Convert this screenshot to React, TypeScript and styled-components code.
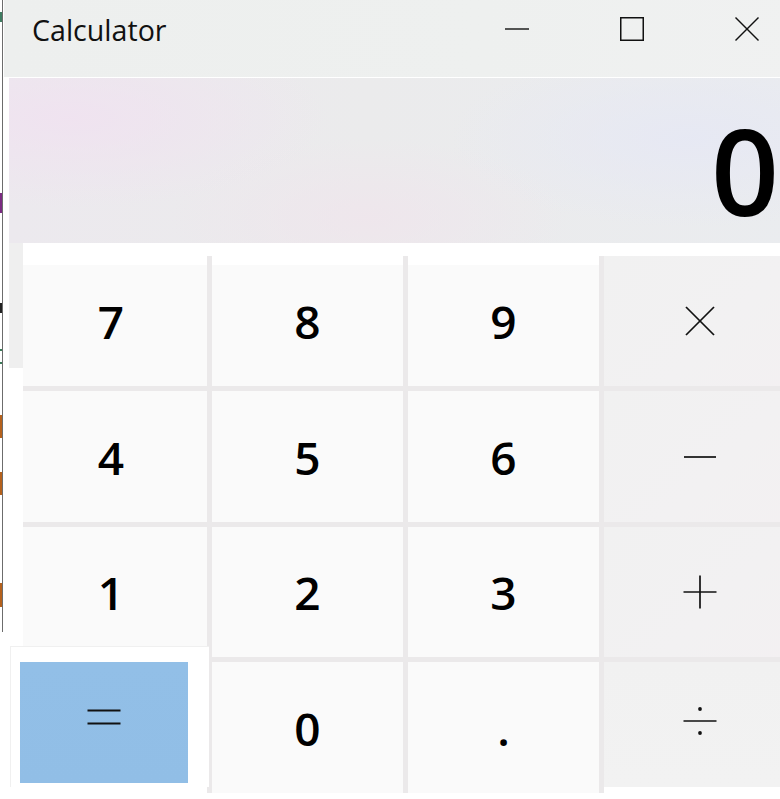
import React from "react";
import styled, { createGlobalStyle, css } from "styled-components";

const Global = createGlobalStyle`
  html, body { margin: 0; padding: 0; background: #ffffff; }
  body { width: 780px; height: 799px; overflow: hidden; font-family: "Open Sans", "Noto Sans", sans-serif; }
  #root { width: 780px; height: 799px; overflow: hidden; }
`;

const Screen = styled.div`
  display: flex;
  align-items: flex-start;
  width: 780px;
  height: 799px;
  overflow: hidden;
  background: #ffffff;
`;

const Edge = styled.div`
  flex: 0 0 4px;
  height: 632px;
  background:
    linear-gradient(to right, transparent 2px, #6c6c6c 2px, #6c6c6c 3px, transparent 3px),
    linear-gradient(
        to bottom,
        transparent 12px, #3f7d62 12px, #3f7d62 22px, transparent 22px,
        transparent 193px, #7b2b82 193px, #7b2b82 213px, transparent 213px,
        transparent 303px, #222 303px, #222 313px, transparent 313px,
        transparent 349px, #3a7a58 349px, #3a7a58 351px, transparent 351px,
        transparent 362px, #3a7a58 362px, #3a7a58 364px, transparent 364px,
        transparent 415px, #b5611c 415px, #b5611c 438px, transparent 438px,
        transparent 472px, #b5611c 472px, #b5611c 495px, transparent 495px,
        transparent 583px, #b5611c 583px, #b5611c 607px, transparent 607px
      )
      left top / 2px 100% no-repeat;
`;

const Window = styled.div`
  flex: 0 0 800px;
  display: flex;
  flex-direction: column;
`;

const TitleBar = styled.div`
  height: 78px;
  box-sizing: border-box;
  border-bottom: 1px solid #ffffff;
  background: linear-gradient(to right, #edefee 0%, #eef0ef 60%, #f0f1f1 100%);
  display: flex;
  align-items: flex-start;
  padding: 17px 0 0 28px;
`;

const Title = styled.span`
  font-family: "Open Sans", "Noto Sans", sans-serif;
  font-size: 28.6px;
  line-height: 1;
  font-weight: 400;
  color: #111111;
  margin-top: -1px;
`;

const Controls = styled.div`
  margin-left: auto;
  display: flex;
`;

const ControlButton = styled.div`
  width: 115px;
  height: 24px;
  display: flex;
  justify-content: center;
  align-items: center;
`;

const Display = styled.div`
  margin-left: 5px;
  height: 165px;
  box-sizing: border-box;
  display: flex;
  justify-content: flex-end;
  align-items: flex-start;
  padding: 33px 25px 0 0;
  background:
    radial-gradient(ellipse 260px 90px at 60px 40px, rgba(240, 226, 240, 0.9), transparent),
    radial-gradient(ellipse 200px 80px at 360px 140px, rgba(240, 228, 236, 0.7), transparent),
    radial-gradient(ellipse 240px 90px at 680px 60px, rgba(230, 232, 244, 0.9), transparent),
    linear-gradient(to right, #ece9ee 0%, #ebebec 45%, #eaecef 100%);
`;

const Value = styled.span`
  font-family: "Open Sans", "Noto Sans", sans-serif;
  font-size: 119px;
  font-weight: 600;
  line-height: 1;
  color: #000000;
`;

const Keypad = styled.div`
  display: flex;
  align-items: flex-start;
`;

const Gutter = styled.div`
  flex: 0 0 19px;
  display: flex;
  flex-direction: column;
`;

const GrayBlock = styled.div`
  margin-left: 5px;
  width: 14px;
  height: 125px;
  background: #efefef;
`;

const Grid = styled.div`
  margin-top: 13px;
  display: grid;
  grid-template-columns: 184px repeat(3, 191px);
  grid-template-rows: 130px 131px 130px 131px;
  gap: 5px;
  background: #ebe9ea;
`;

type KeyProps = {
  $kind: "digit" | "op" | "equals";
  $inset?: boolean;
  $narrow?: boolean;
  $tail?: boolean;
};

const Key = styled.div<KeyProps>`
  position: relative;
  display: flex;
  justify-content: center;
  align-items: center;
  box-sizing: border-box;
  font-family: "Open Sans", "Noto Sans", sans-serif;
  font-size: 46px;
  font-weight: 600;
  line-height: 1;
  color: #000000;
  background: #fafafa;
  ${(p) => p.$narrow && css`padding-right: 8px;`}
  ${(p) => p.$inset && css`background: linear-gradient(to bottom, #ffffff 9px, #fafafa 9px);`}
  ${(p) =>
    p.$kind === "op" &&
    css`
      background: linear-gradient(135deg, #f1f1f1 0%, #f2f1f2 60%, #f3f0f2 100%);
    `}
  ${(p) =>
    p.$tail &&
    css`
      padding-bottom: 13px;
      background: linear-gradient(to bottom, #f1f1f1 0, #f2f2f2 125px, #ffffff 125px);
    `}
  ${(p) => p.$kind === "equals" && css`background: #ffffff;`}
`;

const EqualsPanel = styled.div`
  position: absolute;
  left: -13px;
  top: -16px;
  width: 199px;
  height: 141px;
  box-sizing: border-box;
  padding: 15px 0 0 9px;
  background: #ffffff;
  border-top: 1px solid #f0f0f0;
  border-left: 1px solid #f0f0f0;
`;

const EqualsFace = styled.div`
  width: 168px;
  height: 121px;
  box-sizing: border-box;
  padding-bottom: 12px;
  display: flex;
  justify-content: center;
  align-items: center;
  background: linear-gradient(to bottom, #92bfe7, #91bee6);
`;

const Icon = ({ children, size = 24 }: { children: React.ReactNode; size?: number }) => (
  <svg width={size} height={size} viewBox={`0 0 ${size} ${size}`} fill="none" stroke="#111" strokeWidth={1.4}>
    {children}
  </svg>
);

const MinimizeIcon = () => (
  <Icon>
    <line x1="0" y1="12" x2="24" y2="12" />
  </Icon>
);
const MaximizeIcon = () => (
  <Icon>
    <rect x="0.75" y="0.75" width="22.5" height="22.5" strokeWidth={1.5} />
  </Icon>
);
const CloseIcon = () => (
  <Icon>
    <line x1="0.5" y1="0.5" x2="23.5" y2="23.5" />
    <line x1="23.5" y1="0.5" x2="0.5" y2="23.5" />
  </Icon>
);

const TimesIcon = () => (
  <Icon size={30}>
    <line x1="1" y1="1" x2="29" y2="29" strokeWidth={1.7} />
    <line x1="29" y1="1" x2="1" y2="29" strokeWidth={1.7} />
  </Icon>
);
const MinusIcon = () => (
  <Icon size={34}>
    <line x1="1" y1="17" x2="33" y2="17" strokeWidth={1.7} />
  </Icon>
);
const PlusIcon = () => (
  <Icon size={34}>
    <line x1="0.5" y1="17" x2="33.5" y2="17" strokeWidth={1.7} />
    <line x1="17" y1="0.5" x2="17" y2="33.5" strokeWidth={1.7} />
  </Icon>
);
const DivideIcon = () => (
  <svg width="34" height="34" viewBox="0 0 34 34">
    <line x1="0.5" y1="17" x2="33.5" y2="17" stroke="#111" strokeWidth={1.7} />
    <circle cx="17" cy="5" r="1.9" fill="#111" />
    <circle cx="17" cy="29" r="1.9" fill="#111" />
  </svg>
);
const EqualsIcon = () => (
  <svg width="34" height="16" viewBox="0 0 34 16">
    <line x1="0.5" y1="1.5" x2="33.5" y2="1.5" stroke="#111" strokeWidth={1.8} />
    <line x1="0.5" y1="14.5" x2="33.5" y2="14.5" stroke="#111" strokeWidth={1.8} />
  </svg>
);

type KeyDef = {
  id: string;
  label?: string;
  icon?: React.ReactNode;
  kind: "digit" | "op" | "equals";
  inset?: boolean;
  narrow?: boolean;
  tail?: boolean;
};

const keys: KeyDef[] = [
  { id: "7", label: "7", kind: "digit", inset: true, narrow: true },
  { id: "8", label: "8", kind: "digit", inset: true },
  { id: "9", label: "9", kind: "digit", inset: true },
  { id: "mul", icon: <TimesIcon />, kind: "op" },
  { id: "4", label: "4", kind: "digit", narrow: true },
  { id: "5", label: "5", kind: "digit" },
  { id: "6", label: "6", kind: "digit" },
  { id: "sub", icon: <MinusIcon />, kind: "op" },
  { id: "1", label: "1", kind: "digit", narrow: true },
  { id: "2", label: "2", kind: "digit" },
  { id: "3", label: "3", kind: "digit" },
  { id: "add", icon: <PlusIcon />, kind: "op" },
  { id: "eq", kind: "equals" },
  { id: "0", label: "0", kind: "digit" },
  { id: "dot", label: ".", kind: "digit" },
  { id: "div", icon: <DivideIcon />, kind: "op", tail: true },
];

export default function App() {
  return (
    <>
      <Global />
      <Screen>
        <Edge />
        <Window>
          <TitleBar>
            <Title>Calculator</Title>
            <Controls>
              <ControlButton>
                <MinimizeIcon />
              </ControlButton>
              <ControlButton>
                <MaximizeIcon />
              </ControlButton>
              <ControlButton>
                <CloseIcon />
              </ControlButton>
            </Controls>
          </TitleBar>
          <Display>
            <Value>0</Value>
          </Display>
          <Keypad>
            <Gutter>
              <GrayBlock />
            </Gutter>
            <Grid>
              {keys.map((k) => (
                <Key key={k.id} $kind={k.kind} $inset={k.inset} $narrow={k.narrow} $tail={k.tail}>
                  {k.kind === "equals" ? (
                    <EqualsPanel>
                      <EqualsFace>
                        <EqualsIcon />
                      </EqualsFace>
                    </EqualsPanel>
                  ) : (
                    k.icon ?? k.label
                  )}
                </Key>
              ))}
            </Grid>
          </Keypad>
        </Window>
      </Screen>
    </>
  );
}
